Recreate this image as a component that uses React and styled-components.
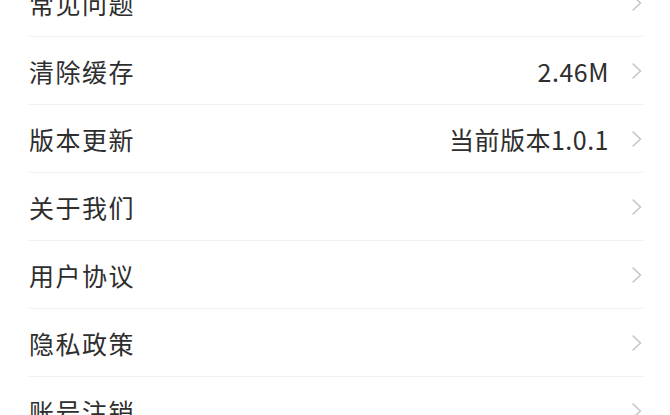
import styled, { createGlobalStyle } from "styled-components";

const GlobalStyle = createGlobalStyle`
  html, body {
    margin:0;
    padding:0;
    background:#ffffff;
    overflow:hidden;
  }
  body {
    font-family:"Noto Sans CJK SC", "Noto Sans", sans-serif;
  }
`

const items = [
  { label: "常见问题" },
  { label: "清除缓存", value: "2.46M" },
  { label: "版本更新", value: "当前版本1.0.1" },
  { label: "关于我们" },
  { label: "用户协议" },
  { label: "隐私政策" },
  { label: "账号注销" },
];

const Chevron = () => (
  <ArrowIcon viewBox="0 0 12 18" width="12" height="18">
    <polyline points="2,2 9.5,9 2,16" fill="none" stroke="#c4c4c4" strokeWidth="1.5" strokeLinecap="round" strokeLinejoin="round" />
  </ArrowIcon>
);

export default function App() {
  return (
    <>
      <GlobalStyle />
      <Page>
        <List>
          {items.map((item) => (
            <Row key={item.label}>
              <Label>{item.label}</Label>
              <Right>
                {item.value && <Value>{item.value}</Value>}
                <Chevron />
              </Right>
            </Row>
          ))}
        </List>
      </Page>
    </>
  );
}

const Page = styled.div`
  width:670px;
  height:415px;
  overflow:hidden;
  background:#fff;
`

const List = styled.div`
  margin-top:-31px;
  padding:0 27px 0 29px;
`

const Row = styled.div`
  height:67px;
  display:flex;
  align-items:center;
  justify-content:space-between;
  border-bottom:1px solid #f0f0f0;
`

const Label = styled.span`
  font-size:25px;
  letter-spacing:1.5px;
  color:#2e2e2e;
`

const Right = styled.div`
  display:flex;
  align-items:center;
  gap:22px;
`

const Value = styled.span`
  font-size:25px;
  letter-spacing:0.5px;
  color:#2e2e2e;
`

const ArrowIcon = styled.svg`
  display:block;
`
